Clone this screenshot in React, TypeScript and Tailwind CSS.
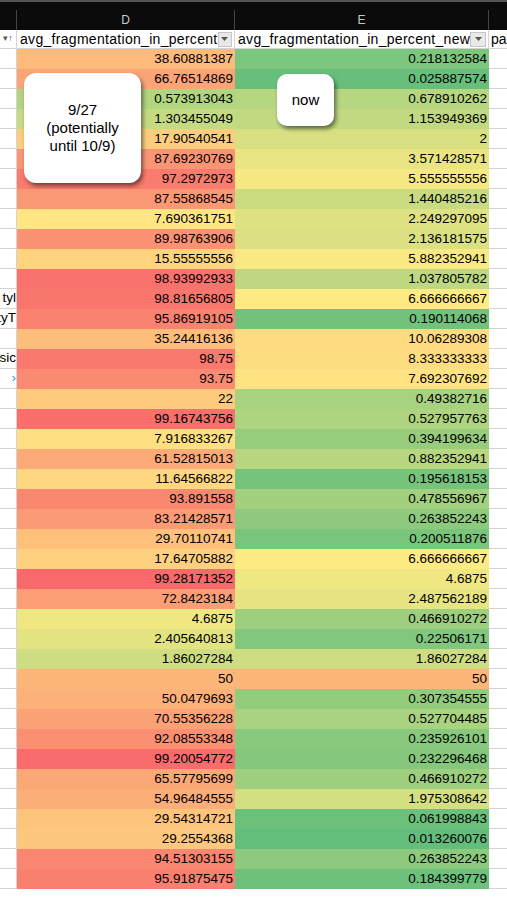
import React from 'react';

const dVals = ['38.60881387','66.76514869','0.573913043','1.303455049','17.90540541','87.69230769','97.2972973','87.55868545','7.690361751','89.98763906','15.55555556','98.93992933','98.81656805','95.86919105','35.24416136','98.75','93.75','22','99.16743756','7.916833267','61.52815013','11.64566822','93.891558','83.21428571','29.70110741','17.64705882','99.28171352','72.8423184','4.6875','2.405640813','1.86027284','50','50.0479693','70.55356228','92.08553348','99.20054772','65.57795699','54.96484555','29.54314721','29.2554368','94.51303155','95.91875475'];
const eVals = ['0.218132584','0.025887574','0.678910262','1.153949369','2','3.571428571','5.555555556','1.440485216','2.249297095','2.136181575','5.882352941','1.037805782','6.666666667','0.190114068','10.06289308','8.333333333','7.692307692','0.49382716','0.527957763','0.394199634','0.882352941','0.195618153','0.478556967','0.263852243','0.200511876','6.666666667','4.6875','2.487562189','0.466910272','0.22506171','1.86027284','50','0.307354555','0.527704485','0.235926101','0.232296468','0.466910272','1.975308642','0.061998843','0.013260076','0.263852243','0.184399779'];

const leftText: Record<number, string> = { 12: 'tyl', 13: 'tyT', 15: 'rsic', 16: '›' };

const green = [99, 190, 123];
const yellow = [255, 235, 132];
const red = [248, 105, 107];

const mix = (a: number[], b: number[], t: number) =>
  `rgb(${a.map((v, i) => Math.round(v + (b[i] - v) * t)).join(',')})`;

// one colour scale over both columns, by percent rank
const all = [...dVals, ...eVals].map(Number).sort((a, b) => a - b);
const colour = (s: string) => {
  const n = Number(s);
  const first = all.indexOf(n);
  const last = all.lastIndexOf(n);
  const p = (first + last) / 2 / (all.length - 1);
  return p <= 0.5 ? mix(green, yellow, p * 2) : mix(yellow, red, (p - 0.5) * 2);
};

const Drop = () => (
  <span className="w-[17px] h-[15px] border border-[#c6c6c6] bg-[#e9e9e9] flex items-center justify-center mr-[2px]">
    <svg width="7" height="4" viewBox="0 0 7 4"><path d="M0 0h7L3.5 4z" fill="#555" /></svg>
  </span>
);

export default function App() {
  return (
    <div className="relative w-[507px] h-[901px] bg-white overflow-hidden text-[13.5px] text-black" style={{ fontFamily: '"Liberation Sans", Arial, sans-serif' }}>
      <div className="h-[10px] bg-[#0b0b0b] border-t-2 border-[#555]" />
      <div className="flex h-[20px] bg-[#0b0b0b] text-[#c8c8c8] text-[12px]">
        <div className="w-[17px] border-r border-[#444]" />
        <div className="w-[218px] flex items-center justify-center border-r border-[#444]">D</div>
        <div className="w-[254px] flex items-center justify-center border-r border-[#444]">E</div>
        <div className="flex-1" />
      </div>
      <div className="flex h-[19px] border-b border-[#d4d4d4] text-[14px]">
        <div className="w-[17px] border-r border-[#d4d4d4] flex items-center justify-center text-[9px] text-[#555]">▾↑</div>
        <div className="w-[218px] flex items-center justify-between pl-[3px] border-r border-[#d4d4d4] tracking-[0.3px]">avg_fragmentation_in_percent<Drop /></div>
        <div className="w-[254px] flex items-center justify-between pl-[3px] border-r border-[#d4d4d4] tracking-[0.3px]">avg_fragmentation_in_percent_new<Drop /></div>
        <div className="flex-1 pl-[2px] flex items-center">pa</div>
      </div>
      {dVals.map((d, i) => (
        <div key={i} className="flex h-[20px]">
          <div className={`w-[17px] border-b border-r border-[#d4d4d4] overflow-hidden whitespace-nowrap flex items-center justify-end ${i === 16 ? 'text-[#1e90ff]' : ''}`}>
            {leftText[i] ?? ''}
          </div>
          <div className="w-[218px] flex items-center justify-end pr-[2px]" style={{ backgroundColor: colour(d) }}>{d}</div>
          <div className="w-[254px] flex items-center justify-end pr-[2px]" style={{ backgroundColor: colour(eVals[i]) }}>{eVals[i]}</div>
          <div className="flex-1 border-b border-[#d4d4d4]" />
        </div>
      ))}
      <div className="absolute left-[24px] top-[73px] w-[117px] h-[110px] bg-white rounded-[12px] shadow-[2px_3px_4px_rgba(0,0,0,0.5)] flex items-center justify-center text-center text-[15px] leading-[18px]">
        9/27<br />(potentially<br />until 10/9)
      </div>
      <div className="absolute left-[277px] top-[74px] w-[57px] h-[52px] bg-white rounded-[10px] shadow-[2px_3px_4px_rgba(0,0,0,0.5)] flex items-center justify-center text-[15px]">
        now
      </div>
    </div>
  );
}
